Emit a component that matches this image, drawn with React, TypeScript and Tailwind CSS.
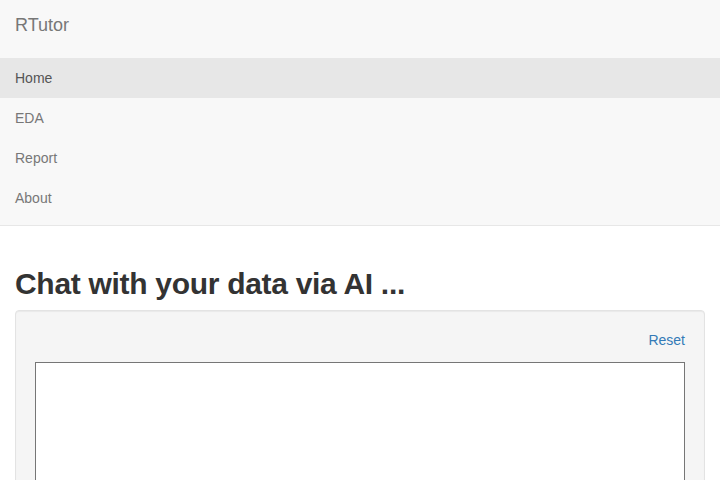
export default function App() {
  const items = ["Home", "EDA", "Report", "About"];
  return (
    <div className="min-h-screen bg-white text-[14px] text-[#333] font-['Liberation_Sans',Arial,sans-serif]">
      {/* Navbar (collapsed) */}
      <nav className="bg-[#f8f8f8] border-b border-[#e7e7e7]">
        <div className="h-[50px] px-[15px] flex items-center">
          <span className="text-[18px] leading-5 text-[#777]">RTutor</span>
        </div>
        <ul className="pt-[8px] pb-[7px]">
          {items.map((item, i) => (
            <li key={item}>
              <a
                href="#"
                className={
                  i === 0
                    ? "block h-10 px-[15px] py-2.5 leading-5 bg-[#e7e7e7] text-[#555]"
                    : "block h-10 px-[15px] py-2.5 leading-5 text-[#777]"
                }
              >
                {item}
              </a>
            </li>
          ))}
        </ul>
      </nav>

      {/* Main */}
      <main className="px-[15px] pt-[41px]">
        <h2 className="text-[30px] leading-[33px] font-bold tracking-[-0.3px] text-[#333] mb-[10px]">
          Chat with your data via AI ...
        </h2>
        <div className="bg-[#f5f5f5] border border-[#e3e3e3] rounded p-[19px] shadow-[inset_0_1px_1px_rgba(0,0,0,0.05)]">
          <div className="text-right leading-5">
            <a href="#" className="text-[#337ab7]">
              Reset
            </a>
          </div>
          <textarea className="mt-3 block w-full h-[200px] bg-white border border-[#767676] resize-none" />
        </div>
      </main>
    </div>
  );
}
